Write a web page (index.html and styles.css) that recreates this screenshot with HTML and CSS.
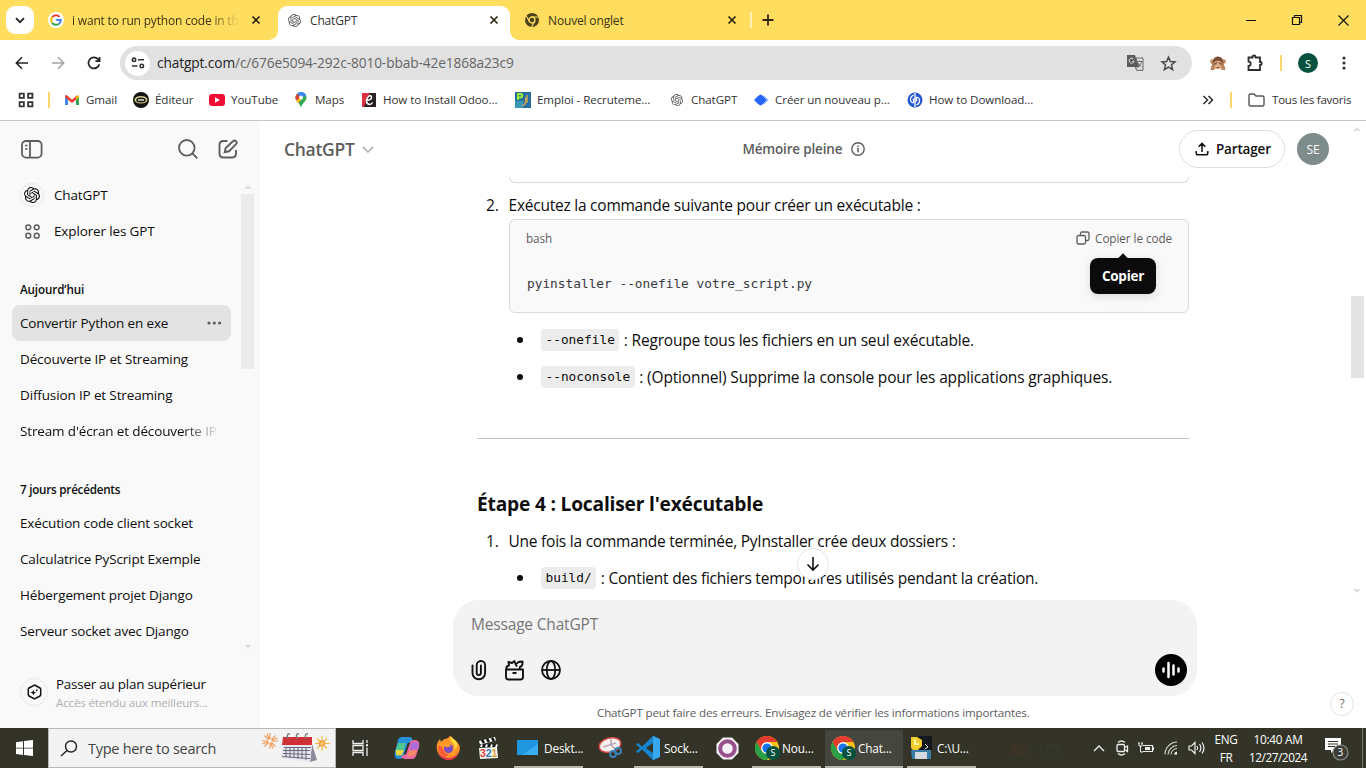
FILE: index.html
```html
<!DOCTYPE html>
<html lang="fr">
<head>
<meta charset="utf-8">
<title>ChatGPT</title>
<link rel="stylesheet" href="styles.css">
</head>
<body>
<svg class="defs" aria-hidden="true">
  <symbol id="gpt" viewBox="0 0 24 24"><path fill="currentColor" d="M22.2819 9.8211a5.9847 5.9847 0 0 0-.5157-4.9108 6.0462 6.0462 0 0 0-6.5098-2.9A6.0651 6.0651 0 0 0 4.9807 4.1818a5.9847 5.9847 0 0 0-3.9977 2.9 6.0462 6.0462 0 0 0 .7427 7.0966 5.98 5.98 0 0 0 .511 4.9107 6.051 6.051 0 0 0 6.5146 2.9001A5.9847 5.9847 0 0 0 13.2599 24a6.0557 6.0557 0 0 0 5.7718-4.2058 5.9894 5.9894 0 0 0 3.9977-2.9001 6.0557 6.0557 0 0 0-.7475-7.0729zm-9.022 12.6081a4.4755 4.4755 0 0 1-2.8764-1.0408l.1419-.0804 4.7783-2.7582a.7948.7948 0 0 0 .3927-.6813v-6.7369l2.02 1.1686a.071.071 0 0 1 .038.052v5.5826a4.504 4.504 0 0 1-4.4945 4.4944zm-9.6607-4.1254a4.4708 4.4708 0 0 1-.5346-3.0137l.142.0852 4.783 2.7582a.7712.7712 0 0 0 .7806 0l5.8428-3.3685v2.3324a.0804.0804 0 0 1-.0332.0615L9.74 19.9502a4.4992 4.4992 0 0 1-6.1408-1.6464zM2.3408 7.8956a4.485 4.485 0 0 1 2.3655-1.9728V11.6a.7664.7664 0 0 0 .3879.6765l5.8144 3.3543-2.0201 1.1685a.0757.0757 0 0 1-.071 0l-4.8303-2.7865A4.504 4.504 0 0 1 2.3408 7.872zm16.5963 3.8558L13.1038 8.364 15.1192 7.2a.0757.0757 0 0 1 .071 0l4.8303 2.7913a4.4944 4.4944 0 0 1-.6765 8.1042v-5.6772a.79.79 0 0 0-.407-.667zm2.0107-3.0231l-.142-.0852-4.7735-2.7818a.7759.7759 0 0 0-.7854 0L9.409 9.2297V6.8974a.0662.0662 0 0 1 .0284-.0615l4.8303-2.7866a4.4992 4.4992 0 0 1 6.6802 4.66zM8.3065 12.863l-2.02-1.1638a.0804.0804 0 0 1-.038-.0567V6.0742a4.4992 4.4992 0 0 1 7.3757-3.4537l-.142.0805L8.704 5.459a.7948.7948 0 0 0-.3927.6813zm1.0976-2.3654l2.602-1.4998 2.6069 1.4998v2.9994l-2.5974 1.4997-2.6067-1.4997Z"/></symbol>
  <symbol id="close" viewBox="0 0 10 10"><path d="M1.5 1.5l7 7M8.500 1.500l-7 7" stroke="currentColor" stroke-width="1.700" fill="none"/></symbol>
  <symbol id="chrome" viewBox="0 0 24 24">
    <circle cx="12" cy="12" r="12" fill="#fbc116"/>
    <path d="M12 6h10.400A12 12 0 0 0 1.600 6l5.200 9z" fill="#e33b2e"/>
    <path d="M1.600 6A12 12 0 0 0 12 24l5.200-9-10.400 0z" fill="#2aa147"/>
    <circle cx="12" cy="12" r="5.900" fill="#fff"/><circle cx="12" cy="12" r="4.600" fill="#1a73e8"/>
    </symbol>
</svg>

<div class="tabstrip">
  <button class="tab-search"><svg width="10" height="7" viewBox="0 0 10 7"><path d="M1 1.200l4 4 4-4" fill="none" stroke="#222" stroke-width="1.800"/></svg></button>
  <div class="tab tab-first">
    <svg width="16" height="16" viewBox="0 0 16 16"><circle cx="8" cy="8" r="8" fill="#fff"/><g fill="none" stroke-width="2"><path d="M11.600 4.800A4.800 4.800 0 0 0 4.100 5.200" stroke="#ea4335"/><path d="M4.100 5.200a4.800 4.800 0 0 0 0 5.600" stroke="#fbbc05"/><path d="M4.100 10.800a4.800 4.800 0 0 0 7 .900" stroke="#34a853"/><path d="M11.100 11.700A4.800 4.800 0 0 0 12.800 8H8.200" stroke="#4285f4"/></g></svg>
    <span class="tab-title fade">i want to run python code in th</span>
    <svg class="x" width="10" height="10"><use href="#close"/></svg>
  </div>
  <div class="tab tab-active">
    <svg class="grey" width="13" height="13"><use href="#gpt"/></svg>
    <span class="tab-title">ChatGPT</span>
    <svg class="x" width="10" height="10"><use href="#close"/></svg>
  </div>
  <div class="tab tab-last">
    <svg width="14" height="14" viewBox="0 0 14 14"><circle cx="7" cy="7" r="7" fill="#4b421c"/><circle cx="7" cy="7" r="3" fill="#4b421c" stroke="#ffde5f" stroke-width="1.300"/><path d="M7 4h6.500M4.400 8.500L1.200 3M9.600 8.500L6.500 14" stroke="#ffde5f" stroke-width="1.100"/></svg>
    <span class="tab-title">Nouvel onglet</span>
    <svg class="x" width="10" height="10"><use href="#close"/></svg>
  </div>
  <i class="tab-sep"></i>
  <svg class="newtab" width="12" height="12" viewBox="0 0 12 12"><path d="M6 .500v11M.500 6h11" stroke="#2b2612" stroke-width="1.800"/></svg>
  <div class="win">
    <svg width="10" height="10" viewBox="0 0 10 10"><path d="M0 5.500h10" stroke="#111"/></svg>
    <svg width="10" height="10" viewBox="0 0 10 10"><path d="M.500 2.500h7v7h-7zM2.500 2.500v-2h7v7h-2" fill="none" stroke="#111" stroke-width="1.200"/></svg>
    <svg width="11" height="11" viewBox="0 0 11 11"><path d="M.500 .500l10 10M10.500 .500l-10 10" stroke="#111" stroke-width="1.200"/></svg>
  </div>
</div>

<div class="toolbar">
  <svg width="14" height="14" viewBox="0 0 14 14"><path d="M13 7H1.500M7 1.200L1.300 7 7 12.800" fill="none" stroke="#222" stroke-width="1.600"/></svg>
  <svg width="14" height="14" viewBox="0 0 14 14"><path d="M1 7h11.500M7 1.200L12.700 7 7 12.800" fill="none" stroke="#a5a5a5" stroke-width="1.500"/></svg>
  <svg width="14" height="14" viewBox="0 0 14 14"><path d="M12.300 8.200A5.500 5.500 0 1 1 11 3.200L12.500 5M12.600 1v4.200H8.400" fill="none" stroke="#222" stroke-width="1.700"/></svg>
  <div class="omnibox">
    <span class="site"><svg width="14" height="12" viewBox="0 0 14 12"><g fill="none" stroke="#333" stroke-width="1.600"><circle cx="3" cy="2.800" r="1.700"/><path d="M7 2.800h6M1 9h5.500"/><circle cx="10.800" cy="9" r="1.700"/></g></svg></span>
    <span class="url"><b>chatgpt.com</b>/c/676e5094-292c-8010-bbab-42e1868a23c9</span>
    <svg width="17" height="16" viewBox="0 0 17 16"><path d="M0 0h8l4 12H0z" fill="#5c5c5c"/><path d="M9 3h7v12.300H9.500L8.500 12H12z" fill="#e1e1e1" stroke="#666"/><path d="M6.800 4.300a2.500 2.500 0 1 0 .300 2H5" stroke="#e1e1e1" fill="none"/><path d="M10.500 6.500h5M13 5.500v1M11 8l3.500 4M14.500 7q-.5 3-3 4" stroke="#666" fill="none" stroke-width=".9"/></svg>
    <svg width="15" height="15" viewBox="0 0 15 15"><path d="M7.500 1.200l1.900 4.300 4.600.400-3.500 3.100 1.100 4.600-4.100-2.500-4.100 2.500L4.500 9 1 5.900l4.600-.400z" fill="none" stroke="#4a4a4a" stroke-width="1.500"/></svg>
  </div>
  <svg class="monkey" width="16" height="16" viewBox="0 0 16 16"><circle cx="2.300" cy="6.500" r="2.300" fill="#c88f66"/><circle cx="13.700" cy="6.500" r="2.300" fill="#c88f66"/><path d="M2.500 8Q3 1.500 8 1.500T13.500 8v4Q8 15.500 2.500 12z" fill="#7c4d33"/><ellipse cx="8" cy="10" rx="5" ry="4.200" fill="#e0b18a"/><path d="M.500 15q0-4 2.500-6.500L7.500 6.500q.5 2.500-2.500 4l-.5 4.500zM15.500 15q0-4-2.500-6.500L8.500 6.500q-.5 2.500 2.500 4l.5 4.500z" fill="#bc845e"/><path d="M3.500 9.500l3.500-2M12.500 9.500L9 7.500M6.500 12.500h3" stroke="#663b2d" stroke-width=".8"/></svg>
  <svg class="ext" width="18" height="18" viewBox="0 0 18 18"><path d="M2.500 3.500h4V3a1.500 1.500 0 0 1 3 0v.5h4.500V8h.300a1.500 1.500 0 0 1 0 3H14v5H2.500v-4a2.200 2.200 0 0 0 0-4.400z" fill="none" stroke="#2d2d2d" stroke-width="1.800"/></svg>
  <i class="ysep"></i>
  <span class="profile">S</span>
  <svg class="dots" width="4" height="16" viewBox="0 0 4 16"><g fill="#333"><circle cx="2" cy="3" r="1.600"/><circle cx="2" cy="8" r="1.600"/><circle cx="2" cy="13" r="1.600"/></g></svg>
</div>

<div class="bookmarks">
  <span><svg width="16" height="16" viewBox="0 0 15 15"><path d="M1.500 1.500h4v4h-4zM9.500 1.500h4v4h-4zM1.500 9.500h4v4h-4zM9.500 9.500h4v4h-4z" fill="none" stroke="#333" stroke-width="1.700"/></svg></span>
  <i class="ysep"></i>
  <span><svg width="16" height="16" viewBox="0 0 16 16"><path d="M1 4v9h3V7z" fill="#4285f4"/><path d="M15 4v9h-3V7z" fill="#34a853"/><path d="M1 3.500L2.500 3 8 7.500 13.500 3v3.500L8 11 1 5.500z" fill="#ea4335"/><path d="M12 5l1.500-2L15 3.800v1.700l-3 2.300z" fill="#fbbc04"/></svg>Gmail</span>
  <span><svg width="16" height="16" viewBox="0 0 16 16"><circle cx="8" cy="8" r="8" fill="#11130f"/><ellipse cx="8" cy="7.800" rx="6.500" ry="3.800" fill="#d7cf8c"/><ellipse cx="8" cy="8" rx="4.800" ry="2.500" fill="#16160e"/><path d="M5 8h6" stroke="#fff" stroke-width="1.300"/></svg>Éditeur</span>
  <span><svg width="16" height="16" viewBox="0 0 16 16"><rect y="2" width="16" height="12" rx="3" fill="#f20d35"/><path d="M6 5.300v5.400L11 8z" fill="#fff"/></svg>YouTube</span>
  <span><svg width="16" height="16" viewBox="0 0 16 16"><path d="M8 0a5.500 5.500 0 0 1 5.500 5.500c0 4-4.500 5.500-5.500 10.200C7 11 2.500 9.500 2.500 5.500A5.500 5.500 0 0 1 8 0z" fill="#34a853"/><path d="M8 0a5.500 5.500 0 0 1 5.200 4L8 5.500 4 2A5.500 5.500 0 0 1 8 0z" fill="#4285f4"/><path d="M4 2L8 5.500 3.300 8.500A5.500 5.500 0 0 1 4 2z" fill="#ea4335"/><path d="M8 5.500l-4.700 3 1.800 2.500L10 6z" fill="#fbbc04"/><circle cx="8" cy="5.500" r="1.900" fill="#fff"/></svg>Maps</span>
  <span><svg width="16" height="16" viewBox="0 0 16 16"><rect x="1" y="1" width="14" height="14" fill="#292124"/><path d="M1 1h8L6 6 3 15H1z" fill="#df303e"/><path d="M5 8.500q5.500-.5 5.500-3T8 4Q5.500 6 5.500 9t3 3.500q2 0 3-2" stroke="#fff" stroke-width="1.500" fill="none"/></svg>How to Install Odoo...</span>
  <span><svg width="16" height="16" viewBox="0 0 16 16"><path d="M0 0h16v16H0z" fill="#276e9e"/><path d="M0 9h8v7H0z" fill="#3a97b5"/><path d="M3 8V2h2.500a1.500 1.500 0 0 1 0 3.500H3" stroke="#9bf237" stroke-width="1.900" fill="none"/><path d="M7 14l3-2 1-7M12 3v8" stroke="#c7a35c" stroke-width="1.500" fill="none"/></svg>Emploi - Recruteme...</span>
  <span><svg class="grey bm-gpt" width="12" height="12"><use href="#gpt"/></svg>ChatGPT</span>
  <span><svg width="16" height="16" viewBox="0 0 16 16"><path d="M1 8l4-4h6l4 4-4 4H5z" fill="#8fb4ff" stroke="#8fb4ff" stroke-linejoin="round"/><path d="M3 8l4.500-4.500L12 8l-4.500 4.500z" fill="#2463f4" stroke="#2463f4" stroke-width="2" stroke-linejoin="round"/></svg>Créer un nouveau p...</span>
  <span><svg width="16" height="16" viewBox="0 0 16 16"><circle cx="8" cy="8" r="7.500" fill="#2358cf"/><path d="M6.500 3Q3 5 3.500 8t3 2.500V6.500M9.500 13q3.500-2 3-5t-3-2.500v4M8 1v14" fill="none" stroke="#fff" stroke-width="1.300"/></svg>How to Download...</span>
  <span class="more"><svg width="12" height="10" viewBox="0 0 12 10"><path d="M1.500 1l4 4-4 4M6.500 1l4 4-4 4" fill="none" stroke="#333" stroke-width="1.600"/></svg></span>
  <i class="ysep"></i>
  <span class="allfav"><svg width="17" height="14" viewBox="0 0 17 14"><path d="M1 2.500Q1 1 2.500 1H6l2 2h6.500Q16 3 16 4.500v7Q16 13 14.500 13h-12Q1 13 1 11.500z" fill="none" stroke="#555" stroke-width="1.400"/></svg>Tous les favoris</span>
</div>

<div class="app">
  <aside class="side">
    <div class="side-top">
      <svg width="22" height="19" viewBox="0 0 22 19"><g fill="none" stroke="#5d5d5d" stroke-width="1.800"><rect x="1" y="1" width="19.600" height="16.600" rx="4"/><path d="M9 1v16.600"/></g><path d="M4 5.500h2.500M4 9h2.500" stroke="#5d5d5d" stroke-width="1.400"/></svg>
      <svg class="push" width="20" height="20" viewBox="0 0 20 20"><g fill="none" stroke="#5d5d5d" stroke-width="1.800"><circle cx="8.800" cy="8.800" r="7.800"/><path d="M14.500 14.500l4.800 4.800"/></g></svg>
      <svg width="20" height="20" viewBox="0 0 20 20"><g fill="none" stroke="#5d5d5d" stroke-width="1.900"><path d="M9.500 2H5.500Q1.500 2 1.500 6v8.500q0 4 4 4H14q4 0 4-4V11"/><path d="M15 2.200q1.500-1.400 3 0t0 3L11 12.300l-4.300 1 1-4.300z"/></g></svg>
    </div>
    <div class="side-body">
      <nav class="side-list">
        <div class="gpt"><span class="ring"><svg width="16" height="16"><use href="#gpt"/></svg></span>ChatGPT</div>
        <div class="gpt"><span class="ring none"><svg width="15" height="15" viewBox="0 0 15 15"><g fill="none" stroke="#5d5d5d" stroke-width="1.500"><circle cx="3.300" cy="3.300" r="2.400"/><circle cx="11.700" cy="3.300" r="2.400"/><circle cx="3.300" cy="11.700" r="2.400"/><circle cx="11.700" cy="11.700" r="2.400"/></g></svg></span>Explorer les GPT</div>
        <h4>Aujourd’hui</h4>
        <div class="chat current">Convertir Python en exe<svg width="15" height="4" viewBox="0 0 15 4"><g fill="#5d5d5d"><circle cx="2" cy="2" r="1.600"/><circle cx="7.300" cy="2" r="1.600"/><circle cx="12.600" cy="2" r="1.600"/></g></svg></div>
        <div class="chat">Découverte IP et Streaming</div>
        <div class="chat">Diffusion IP et Streaming</div>
        <div class="chat faded">Stream d'écran et découverte IP</div>
        <h4 class="older">7 jours précédents</h4>
        <div class="chat">Exécution code client socket</div>
        <div class="chat">Calculatrice PyScript Exemple</div>
        <div class="chat">Hébergement projet Django</div>
        <div class="chat">Serveur socket avec Django</div>
      </nav>
      <div class="scroll"><i class="up"></i><i class="thumb"></i><i class="down"></i></div>
    </div>
    <div class="upgrade">
      <span class="ring big"><svg width="15" height="16" viewBox="0 0 15 16"><path d="M7.500 1l5.500 3q.7.400.7 1.200v5.600q0 .8-.7 1.200l-5.500 3-5.500-3q-.7-.4-.7-1.200V5.200q0-.8.700-1.200z" fill="none" stroke="#111" stroke-width="1.500"/><path d="M6.300 5.800l.8 2 2 .8-2 .8-.8 2-.8-2-2-.8 2-.8zM9.800 4.500l.4 1.300 1.300.4-1.300.4-.4 1.300-.4-1.300-1.300-.4 1.300-.4z" fill="#111"/></svg></span>
      <div><p class="plan">Passer au plan supérieur</p><p class="sub">Accès étendu aux meilleurs...</p></div>
    </div>
  </aside>

  <main class="main">
    <header class="head">
      <span class="model">ChatGPT</span>
      <svg class="chev" width="12" height="8" viewBox="0 0 12 8"><path d="M1 1l5 5 5-5" fill="none" stroke="#a8a8a8" stroke-width="1.500"/></svg>
      <span class="memory">Mémoire pleine<svg width="14" height="14" viewBox="0 0 14 14"><circle cx="7" cy="7" r="6.200" fill="none" stroke="#5d5d5d" stroke-width="1.400"/><path d="M7 6v4.300M7 3.400v1.500" stroke="#5d5d5d" stroke-width="1.500"/></svg></span>
      <button class="share"><svg width="14" height="14" viewBox="0 0 14 14"><path d="M7 10V1.500M3.600 4.700L7 1.300l3.400 3.400M1.200 9v2q0 1.800 1.800 1.800h8q1.800 0 1.800-1.800V9" fill="none" stroke="#111" stroke-width="1.500"/></svg>Partager</button>
      <span class="avatar">SE</span>
    </header>

    <section class="thread">
      <div class="code-end"></div>
      <div class="num n2"><span>2.</span><p>Exécutez la commande suivante pour créer un exécutable :</p></div>
      <div class="code">
        <div class="code-head"><span>bash</span><span class="copy"><svg width="14" height="14" viewBox="0 0 14 14"><g fill="none" stroke="#5d5d5d" stroke-width="1.300"><rect x="1" y="4.500" width="8.500" height="8.500" rx="1.500"/><path d="M4.500 4.500V2.500Q4.500 1 6 1h5.500Q13 1 13 2.500V8q0 1.500-1.500 1.500h-2"/></g></svg>Copier le code</span></div>
        <pre>pyinstaller --onefile votre_script.py</pre>
        <div class="tip">Copier</div>
      </div>
      <div class="bul b1"><i></i><code>--onefile</code><p class="tight">: Regroupe tous les fichiers en un seul exécutable.</p></div>
      <div class="bul b2"><i></i><code>--noconsole</code><p class="tighter">: (Optionnel) Supprime la console pour les applications graphiques.</p></div>
      <hr>
      <h3>Étape 4 : Localiser l'exécutable</h3>
      <div class="num n1"><span>1.</span><p>Une fois la commande terminée, PyInstaller crée deux dossiers :</p></div>
      <div class="bul b3"><i></i><code>build/</code><p class="last">: Contient des fichiers temporaires utilisés pendant la création.</p></div>
      <div class="jump"><svg width="14" height="16" viewBox="0 0 14 16"><path d="M7 1v13M1.500 8.500L7 14l5.500-5.500" fill="none" stroke="#111" stroke-width="1.600"/></svg></div>
    </section>

    <div class="composer">
      <p>Message ChatGPT</p>
      <div class="tools">
        <svg width="16" height="20" viewBox="0 0 16 20"><path d="M1.500 5.500V13a6.300 6.300 0 0 0 12.600 0V5.200a4.200 4.200 0 0 0-8.400 0V13a2.100 2.100 0 0 0 4.200 0V5.500" fill="none" stroke="#111" stroke-width="1.900" stroke-linecap="round"/></svg>
        <svg width="19" height="21" viewBox="0 0 19 21"><g fill="none" stroke="#111" stroke-width="1.900" stroke-linejoin="round"><path d="M1 9.500h17V17q0 2.500-2.500 2.500h-12Q1 19.500 1 17zM7.500 13h4"/><path d="M1.300 9Q1 6 4 5.500L3.500 2l3.500 1L9.500 1l1 3L12 6.500M12 4q0-2.500 5.500-2.500.5 4.500-2.500 5.500L14.500 9"/></g></svg>
        <svg width="20" height="20" viewBox="0 0 20 20"><g fill="none" stroke="#111" stroke-width="1.800"><circle cx="10" cy="10" r="9"/><ellipse cx="10" cy="10" rx="4.200" ry="9"/><path d="M1 10h18"/></g></svg>
        <span class="voice"><svg width="20" height="18" viewBox="0 0 20 18"><path d="M2.500 7.500v3M7.500 2v14M12.500 4.500v9M17.500 7.500v3" stroke="#fff" stroke-width="2.500" stroke-linecap="round"/></svg></span>
      </div>
    </div>
    <p class="note">ChatGPT peut faire des erreurs. Envisagez de vérifier les informations importantes.</p>
    <div class="page-scroll"><i class="up"></i><i class="thumb"></i><i class="down"></i></div>
    <span class="help">?</span>
  </main>
</div>

<footer class="taskbar">
  <span class="cell start"><svg width="17" height="16" viewBox="0 0 17 16"><path d="M0 2.200l7-1v6.500H0zM8 1l9-1v7.700H8zM0 8.600h7v6.300l-7-1zM8 8.600h9V16l-9-1z" fill="#fff"/></svg></span>
  <div class="search">
    <svg width="18" height="17" viewBox="0 0 18 17"><g fill="none" stroke="#222" stroke-width="1.400"><circle cx="11" cy="6.500" r="5.500"/><path d="M7 10.500L1 16"/></g></svg>
    <span>Type here to search</span>
    <svg class="cal" width="72" height="32" viewBox="0 0 72 32">
      <g stroke="#ef9a55" stroke-width="1.100"><path d="M10 1v16M2 9h16M4.500 3.500l11 11M15.500 3.500l-11 11M7 1.500l6 15M2.500 12l15-6"/></g>
      <g stroke="#eeb83c" stroke-width="1.100"><path d="M62 4v15M55 11.500h15M57 6.500l10 10M67 6.500l-10 10"/></g><circle cx="62" cy="11.500" r="3.200" fill="#f2a04b"/><circle cx="62" cy="11.500" r="1.600" fill="#f6d66b"/><circle cx="10" cy="9" r="2" fill="#f5efea"/>
      <path d="M52 12l5 16-7 2z" fill="#8d8a9c"/><path d="M23 11h29l-2 19-29-4z" fill="#e8e5ec"/><path d="M23 5h29v8H22z" fill="#cf2f36"/>
      <path d="M24 15.500h27M23 18.500h27M23 21.500l27 1M22 24.500l28 2M26 15v10M30 15v11M34 15v11M38 15v12M42 15v12M46 15v13" stroke="#5d5e72" stroke-width=".9"/>
      <g fill="none" stroke="#777" stroke-width="1.300"><path d="M28 7q-2-6 2-5M37 7q-2-6 2-5M46 7q-2-6 2-5"/></g>
    </svg>
  </div>
  <span class="cell"><svg width="18" height="16" viewBox="0 0 18 16"><path d="M2 0v3.500h10V0M2 16v-3.500h10V16M2 5.500h10v5H2zM16 0v3M16 7.500V16" fill="none" stroke="#eee" stroke-width="1.300"/><path d="M15 4.200h2v2h-2z" fill="#fff"/></svg></span>
  <span class="cell"><svg width="26" height="24" viewBox="0 0 26 24"><path d="M8 1h8q2 0 3 4l-5 2-4 12q-1 4-5 4-3 0-4-2-1-3 1-9L4 4q1-3 4-3z" fill="#2791db"/><path d="M4 7h8l-3 9H1.200z" fill="#4dc78e"/><path d="M2 14h8l-2 5q-5 1-6-.5z" fill="#e8d53b"/><path d="M18 23h-8q-2 0-3-3l5-2 4-12q1-2 5-2 3 0 4 2 1 3-1 8l-2 6q-1 3-4 3z" fill="#e968a0"/><path d="M17 7l5-1q4 1 2 7l-8 1z" fill="#ab6ddc"/><path d="M15 15l8-1-2 5-8 2z" fill="#f28a66"/><path d="M14 7l-4 11h2l4-11z" fill="#333427"/></svg></span>
  <span class="cell"><svg width="24" height="24" viewBox="0 0 24 24"><path d="M12 2q1-2 3-2 1 3 5 5 5 4 3.500 10A11.500 11.500 0 0 1 1 14Q-.5 8 4 3l1 3q2-3 7-4z" fill="#ff9728"/><path d="M1 12q2 9 11 10 8 0 11-8-2 10-11 10T1 12z" fill="#f0344f"/><path d="M15 1q-2 3 1 5 4 3 2 8 4-2 3-7-1-3-6-6z" fill="#ffda3e"/><path d="M2 10q3-1 5 3 1 5 6 5l-4 3Q2 18 2 10z" fill="#ff5b36"/><circle cx="12.500" cy="12.500" r="4.500" fill="#7c4cc5"/><path d="M7 9q4-3 8 0-2 3-5 2z" fill="#ff9f25"/></svg></span>
  <span class="cell"><svg width="22" height="22" viewBox="0 0 22 22"><path d="M2 4l16-4 1 3.500L3 7.500z" fill="#fff"/><path d="M5 3l2 3M10 2l2 3M15 1l2 3" stroke="#111" stroke-width="2.500"/><path d="M3 7.500h17V10H3z" fill="#111"/><path d="M5 7.500L4 10M10 7.500L9 10M15 7.500L14 10M20 7.500L19 10" stroke="#fff" stroke-width="2"/><path d="M2 11l18-1 1 11-18 1z" fill="#f5f5f2"/><text x="3" y="20" font-family="Liberation Sans" font-size="10.500" font-weight="700"><tspan fill="#e34132">3</tspan><tspan fill="#3279b5">2</tspan><tspan fill="#e09b2d">1</tspan></text></svg></span>
  <span class="task"><svg width="22" height="20" viewBox="0 0 22 20"><path d="M0 2h21v15H0z" fill="#2196e0"/><path d="M5 17L21 6v11z" fill="#38aef1"/></svg>Deskt...</span>
  <span class="cell snip"><svg width="25" height="24" viewBox="0 0 25 24"><ellipse cx="12" cy="9" rx="11" ry="7" fill="#f8f1f0" stroke="#d94a46" stroke-width="1.500" transform="rotate(-15 12 9)"/><path d="M13 2v7l5 5M5 11l13-4" stroke="#b9abb0" stroke-width="1.600" fill="none"/><g fill="none" stroke="#3a82b6" stroke-width="2"><circle cx="15" cy="18" r="3"/><circle cx="20" cy="15" r="3"/></g></svg></span>
  <span class="task vs"><svg width="26" height="24" viewBox="0 0 26 24"><path d="M18 0l7 3v18l-7 3L7 13.500 3 17l-2-1.500L5 12 1 8.500 3 7l4 3.500z" fill="#1684cf"/><path d="M18 7l-7 5 7 5z" fill="#333427"/><path d="M18 0l7 3v18l-7 3z" fill="#36a7ef"/></svg>Sock...</span>
  <span class="cell"><svg width="23" height="23" viewBox="0 0 23 23"><path d="M7 .500h9l6.500 6.500v9L16 22.500H7L.500 16V7z" fill="#f7f1f6"/><circle cx="11.500" cy="11.500" r="7.300" fill="none" stroke="#98508d" stroke-width="4"/></svg></span>
  <span class="task ch"><span class="chr"><svg width="24" height="24"><use href="#chrome"/></svg><b>S</b></span>Nou...</span>
  <span class="task ch on"><span class="chr"><svg width="24" height="24"><use href="#chrome"/></svg><b>S</b></span>Chat...</span>
  <span class="task cmd"><svg width="23" height="24" viewBox="0 0 23 24"><path d="M8 0h14v14H8z" fill="#161820"/><path d="M15 8l3 3-3 2" stroke="#ddd" fill="none"/><path d="M1 1h6l5 3v6l-4 4H3L1 12z" fill="#f0cc2f"/><path d="M5 3v5h4" stroke="#fff49c" stroke-width="2" fill="none"/><path d="M1 14h20v9H2z" fill="#387ca6"/><path d="M5 16h12v7H5z" fill="#d4dadd"/></svg>C:\U...</span>
  <span class="weather"><svg width="22" height="22" viewBox="0 0 22 22"><path d="M5 19a5 5 0 0 1 0-8 6 6 0 0 1 11-2 5 5 0 0 1 0 10z" fill="#3a3326"/></svg>12°C</span>
  <div class="tray">
    <svg width="12" height="8" viewBox="0 0 12 8"><path d="M1 7l5-5 5 5" fill="none" stroke="#eee" stroke-width="1.400"/></svg>
    <svg width="14" height="16" viewBox="0 0 14 16"><g fill="none" stroke="#eee" stroke-width="1.300"><rect x="2" y="4.500" width="7.500" height="7" rx="1"/><path d="M9.500 7.500L12.500 6v5.500l-3-2M3 2.500Q6.500-.5 10 2.500M3 13.500q3.500 3 7 0"/></g></svg>
    <svg width="16" height="12" viewBox="0 0 16 12"><path d="M5 3.500h9.500v6H5" fill="none" stroke="#eee" stroke-width="1.200"/><path d="M15 5h1v3h-1zM7 5h5v3H7z" fill="#eee"/><path d="M1 1v3h3V1M2.500 4v6H5M1 0v2M4 0v2" stroke="#eee" fill="none"/></svg>
    <svg width="15" height="14" viewBox="0 0 15 14"><g fill="none" stroke="#d6d6cf" stroke-width="1.100"><path d="M1 13.500A12.500 12.500 0 0 1 13 1M4 13.500a9.500 9.500 0 0 1 9-9M7 13.500a6.500 6.500 0 0 1 6-6"/></g><path d="M10 13.500a3.500 3.500 0 0 1 3-3v3z" fill="#fff"/></svg>
    <svg width="17" height="14" viewBox="0 0 17 14"><g fill="none" stroke="#eee" stroke-width="1.200"><path d="M1 5h2.500L7 1.500v11L3.500 9H1zM9 5q1.300 2 0 4M11.500 3q2.800 4 0 8M14 1.500q4 5.500 0 11"/></g></svg>
  </div>
  <span class="lang">ENG<br>FR</span>
  <span class="clock"><span>10:40 AM</span><br>12/27/2024</span>
  <span class="notif"><svg width="25" height="25" viewBox="0 0 25 25"><path d="M0 2h16v12H9l-3 3v-3H0z" fill="#fff"/><path d="M3 5.500h10M3 8h10M3 10.500h7" stroke="#333427"/><circle cx="15.500" cy="16.500" r="7.500" fill="#3d3e37" stroke="#8e8e88" stroke-width="1.200"/></svg><b>3</b></span>
  <i class="peek"></i>
</footer>
</body>
</html>
```
FILE: styles.css
```css
* { box-sizing: border-box; }
body { margin: 0; width: 1366px; height: 768px; overflow: hidden; display: flex; flex-direction: column; background: #fff; color: #0d0d0d; font-family: "Open Sans", "Noto Sans", sans-serif; font-size: 13.5px; letter-spacing: -.14px; }
p, h3, h4, pre { margin: 0; font-weight: 400; }
button { font: inherit; letter-spacing: inherit; color: inherit; padding: 0; border: 0; }
svg { display: block; flex: none; overflow: visible; }
.defs { position: absolute; width: 0; height: 0; }
.grey { color: #555; }

/* Tab strip */
.tabstrip { flex: none; height: 40px; background: #ffde5f; display: flex; align-items: center; font-size: 12px; letter-spacing: -.16px; white-space: nowrap; }
.tab-search { width: 28px; height: 28px; margin-left: 6px; border-radius: 9px; background: #fff; display: flex; align-items: center; justify-content: center; }
.tab { display: flex; align-items: center; color: #3b3315; }
.tab .x { color: #2b2612; margin-left: auto; }
.tab-first { width: 213px; margin-left: 14px; }
.tab-first .tab-title { margin-left: 8px; width: 168px; font-size: 12px; letter-spacing: -.18px; }
.fade { -webkit-mask-image: linear-gradient(90deg, #000 82%, transparent); mask-image: linear-gradient(90deg, #000 82%, transparent); }
.tab-active { align-self: flex-end; position: relative; width: 232px; height: 34px; margin-left: 17px; padding: 0 11px 6px 10px; background: #fff; border-radius: 9px 9px 0 0; color: #333; }
.tab-active::before, .tab-active::after { content: ""; position: absolute; bottom: 0; width: 9px; height: 9px; }
.tab-active::before { left: -9px; background: radial-gradient(circle at 0 0, transparent 8.500px, #fff 9px); }
.tab-active::after { right: -9px; background: radial-gradient(circle at 100% 0, transparent 8.500px, #fff 9px); }
.tab-active .tab-title { margin-left: 9px; }
.tab-last { width: 212px; margin-left: 15px; }
.tab-last .tab-title { margin-left: 9px; }
.tab-sep { width: 2px; height: 16px; margin-left: 13px; background: #fff1b5; }
.newtab { margin-left: 10px; }
.win { display: flex; align-items: center; gap: 36px; margin: 0 17px 0 auto; }

/* Toolbar */
.toolbar { flex: none; height: 46px; background: #fff; display: flex; align-items: center; padding-left: 15px; }
.toolbar > svg + svg { margin-left: 22px; }
.omnibox { width: 1072px; height: 34px; margin-left: 19px; border-radius: 17px; background: #e1e1e1; display: flex; align-items: center; padding: 0 16px 0 5px; }
.site { width: 25px; height: 25px; border-radius: 50%; background: #fff; display: flex; align-items: center; justify-content: center; }
.url { margin: -2px auto 0 7px; color: #666; font-size: 13.7px; letter-spacing: -.11px; }
.url b { font-weight: 400; color: #222; }
.omnibox svg + svg { margin-left: 17px; }
.toolbar > .monkey { margin-left: 18px; }
.toolbar > .monkey + .ext { margin-left: 20px; }
.ysep { width: 2px; height: 16px; background: #ffd76b; }
.toolbar .ysep { margin-left: 16px; }
.profile { width: 20px; height: 20px; margin-left: 16px; border-radius: 50%; background: #07513f; color: #fff; font-size: 11px; display: flex; align-items: center; justify-content: center; }
.dots { margin-left: 24px; }

/* Bookmarks */
.bookmarks { flex: none; height: 35px; border-bottom: 1px solid #c6c6c6; padding: 0 0 7px 18px; display: grid; grid-template-columns: 30px 16px 69px 76px 84px 68px 154px 154px 84px 154px 295px 28px 18px auto; align-items: center; font-size: 11.6px; letter-spacing: -.08px; color: #333; white-space: nowrap; }
.bookmarks span { display: flex; align-items: center; gap: 6px; }
.bookmarks .bm-gpt { margin: 0 2px; }
.bookmarks .allfav { gap: 7px; letter-spacing: -.25px; }

/* Sidebar */
.app { flex: 1; min-height: 0; display: flex; }
.side { width: 260px; background: #f9f9f9; display: flex; flex-direction: column; }
.side-top { height: 56px; flex: none; display: flex; align-items: center; gap: 20px; padding: 0 22px 0 21px; }
.side-top .push { margin-left: auto; }
.side-body { height: 472px; padding-left: 12px; display: flex; justify-content: space-between; }
.side-list { width: 219px; }
.gpt, .chat { height: 36px; display: flex; align-items: center; padding-left: 8px; border-radius: 8px; white-space: nowrap; }
.ring { width: 24px; height: 24px; border: 1px solid #e9e9e9; border-radius: 50%; display: flex; align-items: center; justify-content: center; margin-right: 10px; }
.ring.none { border-color: transparent; }
h4 { font-size: 11.700px; font-weight: 600; letter-spacing: -.14px; line-height: 16px; padding: 0 0 0 8px; margin: 32px 0 8px; }
.current { background: #e3e3e3; justify-content: space-between; padding-right: 9px; }
.faded { width: 208px; overflow: hidden; -webkit-mask-image: linear-gradient(90deg, #000 82%, transparent); mask-image: linear-gradient(90deg, #000 82%, transparent); }
.older { letter-spacing: -.25px; }
.scroll { width: 13px; margin: 8px 6px 0 0; display: flex; flex-direction: column; align-items: center; }
.up, .down { border: 4px solid transparent; width: 0; height: 0; }
.up { border-top: 0; border-bottom: 4px solid #e0e0e0; }
.down { border-bottom: 0; border-top: 4px solid #ddd; margin-top: auto; }
.scroll .thumb { width: 13px; height: 175px; margin-top: 5px; background: #ebebeb; }
.scroll .down { border-width: 4px 3px 0; }
.upgrade { height: 79px; display: flex; align-items: center; padding: 7px 0 0 20px; }
.ring.big { width: 28px; height: 28px; margin-right: 8px; }
.plan { line-height: 20px; font-size: 13.400px; letter-spacing: -.21px; }
.sub { line-height: 17px; font-size: 11.600px; letter-spacing: -.17px; color: #b0b0b0; }

/* Main column */
.main { position: relative; flex: 1; display: flex; flex-direction: column; }
.head { height: 56px; flex: none; display: flex; align-items: center; padding-left: 24px; color: #5d5d5d; font-weight: 600; font-size: 13.500px; letter-spacing: -.18px; }
.model { width: 71px; font-size: 17.500px; letter-spacing: -.3px; }
.chev { margin: 2px 0 0 7px; }
.memory { margin-left: 368.500px; width: 122.500px; display: flex; align-items: center; justify-content: space-between; }
.share { width: 106px; height: 38px; margin-left: 314px; border: 1px solid #dedede; border-radius: 19px; background: #fff; color: #111; display: flex; align-items: center; gap: 7px; padding-left: 15px; font-weight: 600; }
.avatar { width: 32px; height: 32px; margin-left: 12px; border-radius: 50%; background: #7d8b8b; color: #fff; display: flex; align-items: center; justify-content: center; font-weight: 400; font-size: 12px; }

.thread { position: relative; height: 415px; flex: none; width: 712px; margin-left: 217px; font-size: 15.500px; letter-spacing: -.235px; line-height: 24px; overflow: hidden; white-space: nowrap; }
.code-end { height: 6px; margin-left: 32px; border: 1px solid #dadada; border-top: 0; border-radius: 0 0 6px 6px; }
.num { display: flex; padding-left: 9px; }
.num span { width: 22.500px; }
.n2 { margin-top: 10px; }
.code { position: relative; height: 94px; margin: 2px 0 0 32px; border: 1px solid #dadada; border-radius: 6px; background: #f9f9f9; }
.code-head { display: flex; justify-content: space-between; padding: 6px 16px 0; font-size: 11.700px; letter-spacing: -.06px; color: #5d5d5d; }
.copy { display: flex; align-items: center; gap: 5px; }
.code pre { padding: 22px 17px; font: 12.800px/24px "DejaVu Sans Mono", monospace; letter-spacing: 0; color: #383a42; }
.tip { position: absolute; left: 580px; top: 38px; width: 66px; height: 36px; border-radius: 8px; background: #0b0b0b; color: #fff; font-size: 13.500px; font-weight: 700; letter-spacing: -.28px; line-height: 36px; text-align: center; box-shadow: 0 2px 10px #0002; }
.tip::before { content: ""; position: absolute; left: 29px; top: -3px; width: 8px; height: 8px; background: #0b0b0b; transform: rotate(45deg); }
.bul { display: flex; align-items: center; height: 24px; padding-left: 40px; }
.bul i { width: 6px; height: 6px; border-radius: 50%; background: #0d0d0d; margin-right: 18px; }
.bul code { height: 22px; padding: 0 4.500px; margin-right: 4.500px; border-radius: 4px; background: #ececec; font: 500 12.800px/22px "DejaVu Sans Mono", monospace; letter-spacing: 0; }
.b1 { margin-top: 15px; }
.b2 { margin-top: 13px; }
.bul p { margin-top: -1px; }
.tight { letter-spacing: -.195px; }
.tighter { letter-spacing: -.15px; }
.last { letter-spacing: -.22px; }
hr { height: 1px; border: 0; background: #c4c4c4; margin: 49px 0; }
h3 { font-size: 19.200px; font-weight: 700; line-height: 32px; letter-spacing: -.2px; }
.n1 { margin-top: 9px; }
.b3 { margin-top: 13px; }
.jump { position: absolute; left: 320px; top: 371px; width: 32px; height: 32px; border: 1px solid #e6e6e6; border-radius: 50%; background: #fff; display: flex; align-items: center; justify-content: center; }

.composer { height: 96px; flex: none; width: 744px; margin: 8px 0 0 193px; padding: 12px 10px 0 18px; border-radius: 26px; background: #f3f3f3; }
.composer p { font-size: 15.500px; line-height: 24px; letter-spacing: -.18px; color: #767676; }
.tools { display: flex; align-items: center; height: 32px; margin-top: 18px; gap: 17.500px; }
.voice { width: 32px; height: 32px; margin-left: auto; border-radius: 50%; background: #000; display: flex; align-items: center; justify-content: center; }
.note { margin: 8px 0 0 337px; font-size: 11.600px; line-height: 17px; letter-spacing: -.165px; color: #5d5d5d; }
.page-scroll { position: absolute; right: 2px; top: 6px; width: 14px; height: 466px; display: flex; flex-direction: column; align-items: center; }
.page-scroll .thumb { width: 13px; height: 82px; margin-top: 165px; background: #e4e4e4; }
.help { position: absolute; right: 12px; bottom: 12px; width: 24px; height: 24px; border: 1px solid #e4e4e4; border-radius: 50%; text-align: center; line-height: 22px; font-size: 12px; color: #666; }

/* Taskbar */
.taskbar { height: 40px; flex: none; background: #333427; color: #fff; display: grid; grid-template-columns: 48px 288px 48px 46px 36px 44px 76px 46px 73px 44px 73px 82px 73px 110px 124px 30px 74px 47px 4px; align-items: center; font-size: 11.800px; letter-spacing: -.15px; white-space: nowrap; }
.cell { display: flex; justify-content: center; }
.search { align-self: stretch; background: #f3f3f3; border: 1px solid #b8b8b5; color: #444; display: flex; align-items: center; padding: 0 3px 0 11px; font-size: 14.500px; letter-spacing: -.28px; }
.search span { margin: 0 auto 0 10px; }
.task { position: relative; align-self: stretch; margin-left: 4px; margin-right: 3px; padding-left: 3px; display: flex; align-items: center; gap: 5px; border-bottom: 2px solid #b7b7ae; border-top: 2px solid transparent; }
.vs { margin: 0 2px 0 2px; padding-left: 1px; gap: 3px; }
.ch { margin: 0 1px 0 3px; gap: 3px; }
.on { background: #45463d; background-clip: padding-box; padding-left: 6px; }
.cmd { margin: 0 1px 0 3px; gap: 4px; }
.chr { position: relative; }
.chr b { position: absolute; left: 11px; top: 10px; width: 14px; height: 14px; border-radius: 50%; background: #07513f; font: 9px/14px "Open Sans", sans-serif; text-align: center; }
.snip { padding-left: 2px; }
.weather { display: flex; align-items: center; gap: 9px; padding-left: 30px; color: #3a3b2f; }
.tray { display: flex; align-items: center; justify-content: space-between; padding: 0 6px 0 6px; }
.lang, .clock { text-align: center; line-height: 18px; letter-spacing: -.36px; }
.clock { letter-spacing: -.45px; }
.clock span { letter-spacing: -.25px; }
.notif { position: relative; padding-left: 10px; }
.notif b { position: absolute; left: 22.500px; top: 9px; font: 10px/15px "Open Sans", sans-serif; }
.peek { height: 40px; border-left: 1px solid #777870; }
```
